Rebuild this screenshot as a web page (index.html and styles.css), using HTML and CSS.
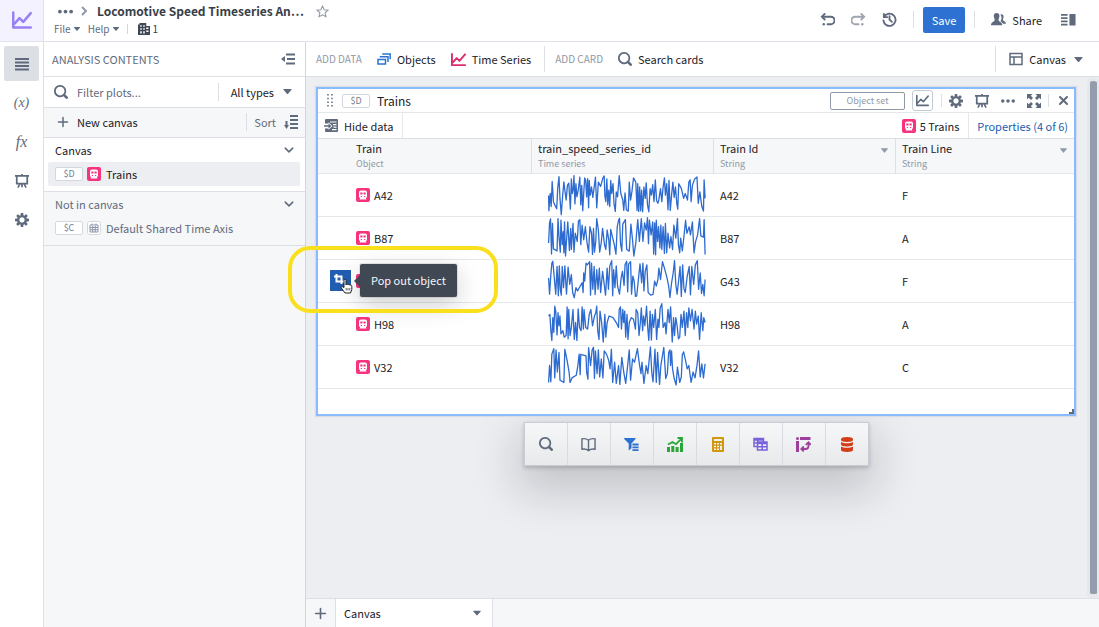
FILE: index.html
```html
<!DOCTYPE html>
<html lang="en">
<head>
    <meta charset="utf-8">
    <title>Locomotive Speed Timeseries Analysis</title>
    <link rel="stylesheet" href="styles.css">
</head>
<body>
    <!-- Shared icons -->
    <svg class="sprite" aria-hidden="true">
        <symbol id="search" viewBox="0 0 16 16"><path d="M15.55 13.43l-2.67-2.68a6.94 6.94 0 001.11-3.76c0-3.87-3.13-7-7-7s-7 3.13-7 7 3.13 7 7 7c1.39 0 2.68-.42 3.76-1.11l2.68 2.67a1.498 1.498 0 102.12-2.12zm-8.56-1.44c-2.76 0-5-2.24-5-5s2.24-5 5-5 5 2.24 5 5-2.24 5-5 5z"/></symbol>
        <symbol id="caret" viewBox="0 0 16 16"><path d="M14 5c0-.5-.4-.8-.8-.8H2.8c-.8 0-1.1.8-.6 1.3l5.2 6c.3.4.9.4 1.2 0l5.2-6c.1-.1.2-.3.2-.5z"/></symbol>
        <symbol id="chevron" viewBox="0 0 16 16"><path d="M3 5.5l5 5 5-5" fill="none" stroke="currentColor" stroke-width="2" stroke-linecap="round" stroke-linejoin="round"/></symbol>
        <symbol id="plus" viewBox="0 0 16 16"><path d="M8 2v12M2 8h12" fill="none" stroke="currentColor" stroke-width="2" stroke-linecap="round"/></symbol>
        <symbol id="more" viewBox="0 0 16 16"><circle cx="2" cy="8" r="2"/><circle cx="8" cy="8" r="2"/><circle cx="14" cy="8" r="2"/></symbol>
        <symbol id="chart" viewBox="0 0 16 16"><path d="M1 2v12h14M2 11l4-4.5 3 3 6-7" fill="none" stroke="currentColor" stroke-width="2" stroke-linecap="round" stroke-linejoin="round"/></symbol>
        <symbol id="cog" viewBox="0 0 16 16"><path d="M15.19 6.39h-1.85c-.11-.37-.27-.71-.45-1.04l1.36-1.36c.31-.31.31-.82 0-1.13l-1.13-1.13a.803.803 0 00-1.13 0l-1.36 1.36c-.33-.17-.67-.33-1.04-.44V.79c0-.44-.36-.8-.8-.8h-1.6c-.44 0-.8.36-.8.8v1.86c-.39.12-.75.28-1.1.47l-1.3-1.3c-.3-.3-.79-.3-1.09 0L1.82 2.91c-.3.3-.3.79 0 1.09l1.3 1.3c-.2.34-.36.7-.48 1.09H.79c-.44 0-.8.36-.8.8v1.6c0 .44.36.8.8.8h1.85c.11.37.27.71.45 1.04l-1.36 1.36c-.31.31-.31.82 0 1.13l1.13 1.13c.31.31.82.31 1.13 0l1.36-1.36c.33.18.67.33 1.04.44v1.86c0 .44.36.8.8.8h1.6c.44 0 .8-.36.8-.8v-1.86c.39-.12.75-.28 1.1-.47l1.3 1.3c.3.3.79.3 1.09 0l1.09-1.09c.3-.3.3-.79 0-1.09l-1.3-1.3c.19-.35.36-.71.48-1.1h1.85c.44 0 .8-.36.8-.8v-1.6a.816.816 0 00-.81-.79zm-7.2 4.6c-1.66 0-3-1.34-3-3s1.34-3 3-3 3 1.34 3 3-1.34 3-3 3z"/></symbol>
        <symbol id="board" viewBox="0 0 16 16"><path d="M0 1h7V0h2v1h7v2h-1v9h-3.2l1.7 3-1.7 1-2-4H9v3H7v-3h-.8l-2 4-1.7-1 1.7-3H1V3H0zm3 2v7h10V3z"/></symbol>
        <symbol id="train" viewBox="0 0 14 14"><rect width="14" height="14" rx="2" fill="#f5337e"/><path fill="#fff" d="M5 2.500h4a2 2 0 012 2v4a2 2 0 01-1.200 1.800l.7 1.200H3.500l.7-1.200A2 2 0 013 8.500v-4a2 2 0 012-2z"/><path fill="#f5337e" d="M4.300 4.500h2.200v2H4.300zM7.500 4.500h2.200v2H7.500zM4.800 8h1.200v1H4.800zM8 8h1.200v1H8z"/></symbol>
    </svg>

    <header class="header">
        <div class="logo"><svg width="22" height="20"><use href="#chart"/></svg></div>
        <div class="heading">
            <div class="title-row">
                <button class="icon-btn" aria-label="Parent folders"><svg width="15" height="15"><use href="#more"/></svg></button>
                <svg class="crumb" width="10" height="10" viewBox="0 0 10 10"><path d="M3 1l4 4-4 4"/></svg>
                <h1>Locomotive Speed Timeseries An…</h1>
                <button class="icon-btn star" aria-label="Favorite"><svg width="13" height="13" viewBox="0 0 16 16"><path d="M8 1.300l2 4.500 4.900.5-3.700 3.300 1.100 4.900L8 12l-4.300 2.500 1.100-4.900L1.100 6.300 6 5.800z" fill="none" stroke="currentColor" stroke-width="1.300"/></svg></button>
            </div>
            <div class="menu-row">
                <button>File <svg width="8" height="8"><use href="#caret"/></svg></button>
                <button>Help <svg width="8" height="8"><use href="#caret"/></svg></button>
                <span class="org">
                    <svg width="12" height="12" viewBox="0 0 16 16"><path fill-rule="evenodd" d="M2 0h9v4h5v12H0V2h2zM3 3v2h2V3zm4 0v2h2V3zM3 7v2h2V7zm4 0v2h2V7zm-4 4v3h2v-3zm4 0v3h2v-3zm4-5v2h3V6zm0 4v2h3v-2z"/></svg>
                    1
                </span>
            </div>
        </div>
        <div class="actions">
            <button class="icon-btn" aria-label="Undo"><svg class="line" width="15" height="15" viewBox="0 0 16 16"><path d="M5 2L2 5l3 3M2 5h9.500a3.500 3.500 0 010 8H8"/><circle class="dot" cx="4" cy="13" r="1.300"/></svg></button>
            <button class="icon-btn faded" aria-label="Redo"><svg class="line" width="15" height="15" viewBox="0 0 16 16"><path d="M11 2l3 3-3 3M14 5H4.500a3.500 3.500 0 000 8H8"/><circle class="dot" cx="12" cy="13" r="1.300"/></svg></button>
            <button class="icon-btn" aria-label="History"><svg class="line" width="15" height="15" viewBox="0 0 16 16"><path d="M2 2v3.500h3.500M2.200 5.300A6.500 6.500 0 111.500 9M8 4.500V8l2.500 2.500"/></svg></button>
            <button class="save">Save</button>
            <button class="share"><svg width="15" height="15" viewBox="0 0 16 16"><path d="M11 2.500c1.800 0 2.600 1.400 2.400 3-.1 1.200-.7 1.800-.7 2.700 0 1.400 3.300 1.600 3.300 4.300h-3.200c-.8-1.500-2.600-2-2.600-2.800 0-.7 1-1.600 1-3.700 0-1.300-.5-2.300-1.300-3 .3-.3.700-.5 1.100-.5z"/><path d="M6 1c2.200 0 3.300 1.600 3 3.800C8.800 6.500 8 7.200 8 8.500c0 1.900 4 1.900 4 5.500H0c0-3.600 4-3.600 4-5.500 0-1.300-.8-2-1-3.700C2.700 2.600 3.800 1 6 1z"/></svg>Share</button>
            <button class="icon-btn" aria-label="Toggle panel"><svg width="15" height="15" viewBox="0 0 16 16"><path d="M0 2h7v2H0zM0 5.500h7v2H0zM0 9h7v2H0zM0 12.500h7v2H0zM9 2h6.500v12.500H9z"/></svg></button>
        </div>
    </header>

    <div class="workspace">
        <nav class="rail">
            <button class="active" aria-label="Contents"><svg width="14" height="14" viewBox="0 0 14 14"><path d="M0 1h14v2H0zM0 4.500h14v2H0zM0 8h14v2H0zM0 11.500h14v2H0z"/></svg></button>
            <button>(x)</button>
            <button class="fx">fx</button>
            <button aria-label="Presentation"><svg width="14" height="14"><use href="#board"/></svg></button>
            <button aria-label="Settings"><svg width="14" height="14"><use href="#cog"/></svg></button>
        </nav>

        <aside class="sidebar">
            <div class="side-head">
                <h2>ANALYSIS CONTENTS</h2>
                <button class="icon-btn" aria-label="Collapse"><svg width="14" height="14" viewBox="0 0 14 14"><path d="M5 1.500h9v2H5zM6 6h8v2H6zM5 10.500h9v2H5zM0 7l4-3v6z"/></svg></button>
            </div>
            <div class="filter">
                <svg width="14" height="14"><use href="#search"/></svg>
                <input type="text" placeholder="Filter plots..." aria-label="Filter plots">
                <button>All types <svg width="11" height="11"><use href="#caret"/></svg></button>
            </div>
            <div class="new-canvas">
                <button><svg width="12" height="12"><use href="#plus"/></svg>New canvas</button>
                <button class="sort">Sort <svg width="14" height="14" viewBox="0 0 14 14"><path d="M6 0h8v2H6zM6 4h8v2H6zM6 8h8v2H6zM6 12h8v2H6zM1.500 6h2v4H5l-2.500 4L0 10h1.500z"/></svg></button>
            </div>
            <section class="group">
                <h3>Canvas <svg width="12" height="12"><use href="#chevron"/></svg></h3>
                <a class="item selected" href="#"><span class="tag">$D</span><svg width="14" height="14"><use href="#train"/></svg>Trains</a>
            </section>
            <section class="group muted">
                <h3>Not in canvas <svg width="12" height="12"><use href="#chevron"/></svg></h3>
                <a class="item" href="#"><span class="tag">$C</span><svg width="14" height="14" viewBox="0 0 14 14"><rect x=".5" y=".5" width="13" height="13" rx="2" fill="#fff" stroke="#d3d8de"/><path d="M3 4h8v7H3zM3 6.500h8M3 8.700h8M5.700 5v6M8.300 5v6M5 2.500V4M9 2.500V4" fill="none" stroke="#8a96a5"/></svg>Default Shared Time Axis</a>
            </section>
        </aside>

        <main class="main">
            <div class="toolbar">
                <span class="label">ADD DATA</span>
                <button class="objects"><svg class="outline" width="14" height="14" viewBox="0 0 14 14"><path d="M1 7.500h7.500v4.500H1zM3.500 5.500V4.700H11v4.500h-.7M6 2.700V2h7.200v4.500h-.7"/></svg>Objects</button>
                <button class="series"><svg width="15" height="15"><use href="#chart"/></svg>Time Series</button>
                <span class="label split">ADD CARD</span>
                <button class="cards"><svg width="14" height="14"><use href="#search"/></svg>Search cards</button>
                <button class="view"><svg class="outline" width="14" height="14" viewBox="0 0 14 14"><path d="M1 1.500h12v11H1zM1 5h12M5 5v7"/></svg>Canvas<svg width="11" height="11"><use href="#caret"/></svg></button>
            </div>

            <div class="canvas">
                <div class="cards-area">
                    <article class="card">
                        <div class="card-head">
                            <svg width="6" height="13" viewBox="0 0 6 13"><path d="M1 0v13M5 0v13" stroke="#5f6b7c" stroke-width="1.500" stroke-dasharray="1.500 2.200"/></svg>
                            <span class="tag">$D</span>
                            <h2>Trains</h2>
                            <span class="kind">Object set</span>
                            <button class="icon-btn boxed" aria-label="Chart"><svg width="13" height="13"><use href="#chart"/></svg></button>
                            <span class="tools">
                                <button class="icon-btn" aria-label="Settings"><svg width="14" height="14"><use href="#cog"/></svg></button>
                                <button class="icon-btn" aria-label="Present"><svg width="14" height="14"><use href="#board"/></svg></button>
                                <button class="icon-btn" aria-label="More"><svg width="14" height="14"><use href="#more"/></svg></button>
                                <button class="icon-btn" aria-label="Expand"><svg width="14" height="14" viewBox="0 0 14 14"><path d="M0 0h5.500L3.800 1.700 6 4 4 6 1.700 3.800 0 5.500zM14 0v5.500l-1.700-1.700L10 6 8 4l2.200-2.300L8.500 0zM14 14H8.500l1.700-1.700L8 10l2-2 2.300 2.200L14 8.500zM0 14V8.500l1.700 1.700L4 8l2 2-2.200 2.300L5.500 14z"/></svg></button>
                            </span>
                            <button class="icon-btn close" aria-label="Close"><svg class="line" width="11" height="11" viewBox="0 0 11 11"><path d="M2 2l7 7M9 2L2 9"/></svg></button>
                        </div>
                        <div class="card-bar">
                            <button class="hide"><svg width="14" height="13" viewBox="0 0 14 13"><path fill-rule="evenodd" d="M2 0h11a1 1 0 011 1v11a1 1 0 01-1 1H2a1 1 0 01-1-1V9.500h3.500v1.200L8.500 7 4.500 3.200v1.300H1V1a1 1 0 011-1zM9 5v1.200h3.500V5zM9.500 7.500v1.200h3V7.500zM8 10v1.200h4.500V10zM6 2.500v1h6.500v-1z"/><path d="M0 6.200h4.500V4.500L7.500 7l-3 2.500V7.800H0z"/></svg>Hide data</button>
                            <span class="count"><svg width="14" height="14"><use href="#train"/></svg>5 Trains</span>
                            <a class="props" href="#">Properties (4 of 6)</a>
                        </div>
                        <table>
                            <thead>
                                <tr>
                                    <th class="c-train">Train<small>Object</small></th>
                                    <th class="c-col">train_speed_series_id<small>Time series</small></th>
                                    <th class="c-col">Train Id<small>String</small><svg class="sorter" width="9" height="9"><use href="#caret"/></svg></th>
                                    <th>Train Line<small>String</small><svg class="sorter" width="9" height="9"><use href="#caret"/></svg></th>
                                </tr>
                            </thead>
                            <tbody>
                                <tr>
                                    <td><span class="object"><svg width="14" height="14"><use href="#train"/></svg>A42</span></td>
                                    <td><svg class="spark" viewBox="0 0 486 126"><polyline points="2,66 3,113 7,60 10,100 13,23 17,85 21,95 27,107 30,45 34,8 37,75 41,125 45,70 49,24 52,50 56,80 60,35 64,28 69,108 72,15 75,60 78,45 80,5 83,92 86,30 89,70 93,50 98,10 101,95 104,35 107,113 110,60 113,12 116,20 119,70 122,14 125,104 127,20 130,65 134,40 138,72 146,10 150,104 155,25 162,38 169,12 173,6 175,68 178,85 181,15 184,95 187,50 190,100 193,20 196,60 200,30 203,90 207,115 210,55 214,70 219,5 224,60 230,80 233,112 237,58 241,110 247,114 250,25 254,80 258,55 263,12 270,25 274,112 276,30 279,115 282,40 285,113 288,50 291,116 295,40 299,75 302,27 306,95 310,116 314,45 318,65 322,33 326,85 330,18 334,82 338,90 341,78 346,45 350,85 354,40 358,12 361,65 365,30 369,110 372,20 376,112 380,65 384,25 388,72 392,40 396,90 399,108 402,30 410,44 417,75 422,60 429,80 433,25 437,18 440,85 444,35 451,15 458,9 462,90 467,55 473,100 478,114 480,18 483,75"/></svg></td>
                                    <td>A42</td>
                                    <td>F</td>
                                </tr>
                                <tr>
                                    <td><span class="object"><svg width="14" height="14"><use href="#train"/></svg>B87</span></td>
                                    <td><svg class="spark" viewBox="0 0 486 126"><polyline points="2,80 5,18 8,6 11,114 14,20 17,98 28,104 31,5 34,60 38,108 40,10 44,85 47,45 49,110 51,15 54,120 58,60 61,15 66,103 70,35 72,100 77,20 80,108 84,50 90,75 94,12 98,8 101,85 105,25 110,70 115,30 120,78 125,108 129,30 134,50 137,115 140,35 143,108 147,75 150,5 155,40 159,108 164,78 168,35 174,86 178,100 182,40 187,70 190,116 193,38 198,60 204,85 209,114 213,30 217,10 220,4 223,80 227,105 230,22 238,8 242,100 250,105 255,22 260,70 264,120 270,80 276,8 281,75 287,5 292,75 297,18 302,40 306,2 309,82 312,10 317,55 322,15 325,114 328,18 331,116 333,10 337,75 340,30 344,95 347,25 350,100 354,30 358,112 361,20 365,110 369,50 374,95 378,60 383,100 387,25 393,65 398,5 401,85 405,110 408,65 413,104 418,60 423,10 427,50 434,30 438,55 444,15 449,110 454,75 460,55 466,5 470,58 478,62 480,8 483,115"/></svg></td>
                                    <td>B87</td>
                                    <td>A</td>
                                </tr>
                                <tr>
                                    <td>
                                        <button class="popout" aria-label="Pop out object"><svg width="10" height="10" viewBox="0 0 10 10"><path d="M2.500 0v7.500H10M0 2.500h7.500V10"/></svg></button>
                                        <span class="object"><svg width="14" height="14"><use href="#train"/></svg></span>
                                        <span class="tooltip">Pop out object</span>
                                        <svg class="pointer" width="14" height="16" viewBox="0 0 14 16"><path d="M4 9.500V2.300a1 1 0 012 0V7l.3-.7c.7-.6 1.500-.3 1.700.5.7-.7 1.700-.4 1.900.4.800-.5 1.900-.1 1.900 1v3.300l-1.300 3.500H5L1.300 10c-.6-1 .5-1.900 1.300-1.200z" fill="#fff" stroke="#222" stroke-width="1"/><path d="M6.200 10v2.500M8 10v2.500M9.800 10v2.500" stroke="#222" stroke-width=".7"/></svg>
                                        <span class="ring"></span>
                                    </td>
                                    <td><svg class="spark" viewBox="0 0 486 126"><polyline points="2,55 5,105 9,45 12,10 15,4 20,60 24,105 28,20 32,110 35,18 38,90 41,108 44,20 48,85 52,18 57,105 62,22 67,75 72,45 76,100 81,116 86,85 91,95 105,70 108,100 110,40 113,65 117,10 121,15 128,5 131,108 134,10 138,90 142,20 145,106 150,30 154,90 158,25 162,100 168,35 173,75 177,108 182,25 186,90 190,18 196,2 199,110 202,30 206,85 210,18 214,80 220,105 225,55 229,35 234,78 237,15 242,4 245,98 248,12 254,5 257,105 261,50 265,65 269,112 273,110 278,60 283,12 288,70 292,10 295,95 299,35 304,15 308,100 316,108 323,106 328,65 333,80 338,60 341,25 346,60 352,5 358,25 366,55 371,80 375,115 380,70 385,40 389,2 393,75 397,105 402,60 406,20 410,112 414,15 418,88 422,100 428,50 434,20 438,107 442,20 448,75 453,15 459,2 463,90 468,40 472,103 476,75 480,110 483,60"/></svg></td>
                                    <td>G43</td>
                                    <td>F</td>
                                </tr>
                                <tr>
                                    <td><span class="object"><svg width="14" height="14"><use href="#train"/></svg>H98</span></td>
                                    <td><svg class="spark" viewBox="0 0 486 126"><polyline points="2,40 6,35 9,85 12,115 15,45 18,90 21,10 24,25 28,98 31,30 34,70 37,40 40,95 46,85 50,105 56,100 59,12 62,110 64,20 68,100 72,75 77,20 81,112 85,60 89,115 93,18 97,75 102,85 105,12 109,80 111,20 116,75 122,80 127,35 132,20 137,70 143,40 147,30 150,10 153,85 157,112 160,25 165,60 170,120 175,35 178,105 182,60 188,40 200,45 210,60 217,75 219,20 223,12 226,80 230,20 233,60 236,25 239,105 243,35 246,112 250,60 256,45 263,50 269,80 271,20 276,30 280,100 284,60 287,15 291,85 294,40 298,70 303,10 307,80 310,115 314,25 318,114 321,35 325,75 330,20 334,112 338,50 341,75 345,15 350,2 354,75 360,60 363,95 369,20 373,60 377,12 382,120 386,45 389,100 393,45 397,70 401,110 405,105 409,35 413,75 418,25 422,100 426,30 430,75 433,15 438,55 443,20 449,80 453,25 457,65 462,40 466,112 471,30 476,85 479,45 483,60"/></svg></td>
                                    <td>H98</td>
                                    <td>A</td>
                                </tr>
                                <tr>
                                    <td><span class="object"><svg width="14" height="14"><use href="#train"/></svg>V32</span></td>
                                    <td><svg class="spark" viewBox="0 0 486 126"><polyline points="2,112 5,60 9,110 12,25 18,8 21,98 25,12 29,80 34,20 37,105 49,112 52,10 59,45 65,80 68,112 74,98 87,90 92,60 96,25 99,88 101,26 117,30 119,80 123,102 125,5 131,60 136,12 140,4 143,100 146,15 151,85 155,12 159,95 164,40 169,98 173,15 180,25 187,45 191,70 195,10 199,112 205,50 210,115 217,60 221,118 227,35 233,80 239,115 245,60 250,12 254,105 260,40 266,50 275,8 281,55 286,85 289,50 295,115 302,60 307,85 315,3 319,80 323,110 329,10 333,112 337,20 343,118 347,60 356,4 362,100 367,85 371,20 375,12 377,60 380,15 383,70 388,100 394,120 398,65 405,112 410,95 413,28 417,18 423,45 428,70 433,60 440,112 446,80 452,98 458,60 463,15 468,95 473,55 478,98 483,55"/></svg></td>
                                    <td>V32</td>
                                    <td>C</td>
                                </tr>
                            </tbody>
                        </table>
                        <svg class="resize" width="5" height="5" viewBox="0 0 5 5"><path d="M5 0v5H0V3h3V0z"/></svg>
                    </article>

                    <div class="dock">
                        <button class="gray" aria-label="Search"><svg width="14" height="14"><use href="#search"/></svg></button>
                        <button class="gray" aria-label="Book"><svg class="outline" width="15" height="15" viewBox="0 0 16 16"><path d="M8 3.500C6 1.800 3.500 1.500 1 2v11c2.500-.5 5-.2 7 1.500 2-1.700 4.500-2 7-1.500V2c-2.500-.5-5-.2-7 1.500zv11"/></svg></button>
                        <button class="blue" aria-label="Filter"><svg width="15" height="15" viewBox="0 0 16 16"><path d="M.6 1h11.200c.6 0 .8.700.4 1.100L8 6.800V12l-3 2.500V6.800L.2 2.100C-.2 1.700 0 1 .6 1zM9 7h6.500v2H9zM9 10h6.500v2H9zM9 13h6.500v2H9z"/></svg></button>
                        <button class="green" aria-label="Trend"><svg width="16" height="15" viewBox="0 0 16 15"><path d="M0 10h3v5H0zM4.300 9h3v6h-3zM8.600 10h3v5h-3zM13 6h3v9h-3z"/><path d="M1 7.500L5.500 5 9 7.200 14 2M10.500 1H15v4.500" fill="none" stroke="currentColor" stroke-width="1.800"/></svg></button>
                        <button class="gold" aria-label="Calculator"><svg width="12" height="15" viewBox="0 0 12 15"><path fill-rule="evenodd" d="M1 0h10a1 1 0 011 1v13a1 1 0 01-1 1H1a1 1 0 01-1-1V1a1 1 0 011-1zm1 2v2h8V2zM2 6v1.500h2V6zm3 0v1.500h2V6zm3 0v1.500h2V6zM2 8.700v1.500h2V8.700zm3 0v1.500h2V8.700zm3 0V13h2V8.700zM2 11.500V13h2v-1.500zm3 0V13h2v-1.500z"/></svg></button>
                        <button class="violet" aria-label="Tables"><svg class="outline" width="15" height="14" viewBox="0 0 15 14"><path d="M4 9.500H1v-8h9.500V5M1 3h9M1 6h3M4.500 1.500V5M4.500 5h9.500v8H4.500zM4.500 6.500H14M4.500 9.700H14M9.200 6.500V13"/></svg></button>
                        <button class="purple" aria-label="Pivot"><svg width="15" height="15" viewBox="0 0 15 15"><circle cx="1.500" cy="1.500" r="1.500"/><path d="M4 0h10.500v3H4zM0 4h3v11H0z"/><path d="M12.500 6.500v2.500c0 2-1 3-3 3H6M9.800 7.800l2.700-2.500 2.300 2.500M7.800 9.500L5.300 12l2.500 2.400" fill="none" stroke="currentColor" stroke-width="1.800"/></svg></button>
                        <button class="red" aria-label="Database"><svg width="12" height="15" viewBox="0 0 12 15"><path d="M0 2c0-1.300 2.500-2 6-2s6 .7 6 2v1c0 1.300-2.500 2-6 2S0 4.300 0 3zM0 5c1.300.9 3.500 1.200 6 1.200S10.700 5.900 12 5v2.600c0 1.200-2.500 1.900-6 1.900S0 8.800 0 7.600zM0 9.500c1.300.9 3.500 1.200 6 1.200s4.700-.3 6-1.200V13c0 1.300-2.500 2-6 2s-6-.7-6-2z"/></svg></button>
                    </div>
                </div>
                <div class="scrollbar"></div>
            </div>

            <div class="tabs">
                <button class="add" aria-label="Add canvas"><svg width="13" height="13"><use href="#plus"/></svg></button>
                <button class="tab">Canvas <svg width="10" height="10"><use href="#caret"/></svg></button>
            </div>
        </main>
    </div>
</body>
</html>
```
FILE: styles.css
```css
* {
    box-sizing: border-box;
}

body {
    display: flex;
    flex-direction: column;
    height: 100vh;
    margin: 0;
    overflow: hidden;
    font-family: "Noto Sans CJK SC", "Noto Sans", sans-serif;
    font-size: 11px;
    line-height: 16px;
    color: #1c2127;
    background: #fff;
}

h1, h2, h3 {
    margin: 0;
    font-weight: normal;
    font-size: 11px;
}

button {
    display: flex;
    align-items: center;
    padding: 0;
    border: 0;
    background: none;
    font: inherit;
    color: inherit;
    cursor: pointer;
}

a {
    color: inherit;
    text-decoration: none;
}

svg {
    display: block;
    flex: none;
    fill: currentColor;
    color: #5f6b7c;
}

.sprite {
    position: absolute;
    width: 0;
    height: 0;
}

.line {
    fill: none;
    stroke: currentColor;
    stroke-width: 2;
    stroke-linecap: round;
}

.line .dot {
    fill: currentColor;
    stroke: none;
}

.outline {
    fill: none;
    stroke: currentColor;
    stroke-width: 1.5;
}

.icon-btn {
    justify-content: center;
    flex: none;
}

/* Header */
.header {
    display: flex;
    flex: none;
    height: 42px;
    border-bottom: 1px solid #e1e3ea;
}

.logo {
    display: flex;
    align-items: center;
    justify-content: center;
    width: 44px;
    padding-bottom: 2px;
    background: #f5f2ff;
    border-right: 1px solid #e1e0ee;
}

.logo svg {
    color: #9881f3;
}

.heading {
    padding: 2px 0 0 10px;
}

.title-row {
    display: flex;
    align-items: center;
    height: 18px;
    padding-left: 4px;
}

.title-row h1 {
    margin: 0 12px 0 8px;
    font-size: 12px;
    font-weight: bold;
    color: #383e47;
    white-space: nowrap;
}

.crumb {
    margin-left: 6px;
    fill: none;
    stroke: #8f99a8;
    stroke-width: 2;
}

.star svg {
    color: #8f99a8;
}

.menu-row {
    display: flex;
    align-items: center;
    height: 18px;
    gap: 7px;
    font-size: 10px;
    color: #5f6b7c;
}

.menu-row button {
    gap: 2px;
}

.org {
    display: flex;
    align-items: center;
    gap: 3px;
    height: 10px;
    padding-left: 10px;
    border-left: 1px solid #d3d8de;
    color: #383e47;
}

.org svg {
    color: #404854;
}

.actions {
    display: flex;
    align-items: center;
    margin-left: auto;
    padding: 0 23px 2px 0;
    gap: 16px;
}

.faded {
    opacity: .6;
}

.save {
    height: 26px;
    padding: 0 9px;
    border-radius: 2px;
    background: #2d72d2;
    color: #fff;
    position: relative;
    margin: 0 10px;
}

.save::before,
.save::after {
    content: "";
    position: absolute;
    left: -10px;
    width: 1px;
    height: 17px;
    background: #dce0e5;
}

.save::after {
    left: auto;
    right: -10px;
}

.share {
    gap: 6px;
    margin-right: 3px;
}

/* Left rail */
.workspace {
    display: flex;
    flex: 1;
    min-height: 0;
}

.rail {
    display: flex;
    flex-direction: column;
    flex: none;
    gap: 4px;
    width: 44px;
    padding: 4px;
    border-right: 1px solid #dce0e5;
}

.rail button {
    justify-content: center;
    height: 35px;
    border-radius: 2px;
    font: italic 14px "Liberation Serif", serif;
    color: #5f6b7c;
}

.rail .fx {
    font-size: 16px;
}

.rail .active {
    background: #dce0e5;
}

/* Contents panel */
.sidebar {
    flex: none;
    width: 262px;
    background: #f6f7f9;
    border-right: 1px solid #d3d5dc;
}

.side-head {
    display: flex;
    align-items: center;
    justify-content: space-between;
    height: 35px;
    padding: 0 10px 0 8px;
    border-bottom: 1px solid #dce0e5;
    background: #fff;
}

.side-head h2 {
    color: #5f6b7c;
}

.filter,
.new-canvas {
    display: flex;
    align-items: center;
    height: 31px;
    padding: 0 7px 1px 10px;
    border-bottom: 1px solid #dce0e5;
}

.filter {
    background: #fff;
}

.filter input {
    flex: 1;
    min-width: 0;
    padding: 0 9px;
    border: 0;
    outline: 0;
    background: none;
    font: inherit;
}

.filter input::placeholder {
    color: #5f6b7c;
}

.filter button,
.sort {
    height: 18px;
    border-left: 1px solid #dce0e5;
}

.filter button {
    padding: 0 5px 0 12px;
    gap: 8px;
}

.new-canvas {
    height: 30px;
    justify-content: space-between;
    padding-left: 13px;
}

.new-canvas button {
    gap: 8px;
}

.new-canvas .sort {
    padding-left: 7px;
    color: #5f6b7c;
}

.group {
    height: 54px;
    padding: 0 5px 5px 4px;
    border-bottom: 1px solid #dce0e5;
    background: #fff;
}

.group h3 {
    display: flex;
    align-items: center;
    justify-content: space-between;
    height: 24px;
    padding: 0 5px 0 7px;
}

.muted {
    background: #f6f7f9;
    color: #5f6b7c;
}

.item {
    display: flex;
    align-items: center;
    height: 24px;
    padding-left: 7px;
    gap: 5px;
    border-radius: 2px;
}

.tag {
    width: 28px;
    height: 14px;
    margin-right: -1px;
    border: 1px solid #d3d8de;
    border-radius: 2px;
    background: #fff;
    font-size: 9px;
    line-height: 12px;
    text-align: center;
    color: #738091;
}

.selected {
    background: #edeef2;
}

/* Toolbar over the canvas */
.main {
    display: flex;
    flex-direction: column;
    flex: 1;
    min-width: 0;
}

.toolbar {
    display: flex;
    align-items: center;
    flex: none;
    height: 35px;
    padding: 0 15px 0 10px;
    border-bottom: 1px solid #dce0e5;
}

.label {
    font-size: 10px;
    color: #8f99a8;
}

.toolbar button {
    gap: 6px;
    margin-left: 15px;
}

.objects svg {
    color: #2d72d2;
}

.series svg {
    color: #db2c6f;
}

.split {
    display: flex;
    align-items: center;
    height: 26px;
    margin-left: 13px;
    padding-left: 10px;
    border-left: 1px solid #dce0e5;
}

.toolbar .view {
    gap: 6px;
    height: 26px;
    margin-left: auto;
    padding-left: 13px;
    border-left: 1px solid #dce0e5;
}

.view svg:last-child {
    margin-left: 1px;
}

.canvas {
    display: flex;
    flex: 1;
    min-height: 0;
    background: #edeef2;
}

.cards-area {
    display: flex;
    flex-direction: column;
    align-items: center;
    flex: 1;
    gap: 6px;
    padding: 10px 11px 0 10px;
}

.scrollbar {
    width: 12px;
    border: solid #e6e8ec;
    border-width: 4px 2px 5px 3px;
    border-radius: 6px;
    background: #929dab;
}

/* Trains card */
.card {
    position: relative;
    align-self: stretch;
    padding-bottom: 25px;
    border: 2px solid #8abbff;
    background: #fff;
    box-shadow: 0 0 1px 1px #d9dde4;
}

.card-head {
    display: flex;
    align-items: center;
    height: 24px;
    padding: 0 5px 0 9px;
    border-bottom: 1px solid #e5e8eb;
}

.card-head .tag {
    margin: 0 7px 0 9px;
}

.card-head h2 {
    font-size: 12px;
}

.kind {
    width: 75px;
    height: 18px;
    margin-left: auto;
    border: 1px solid #8f99a8;
    border-radius: 2px;
    font-size: 9px;
    line-height: 16px;
    text-align: center;
    color: #8f99a8;
}

.boxed {
    width: 21px;
    height: 21px;
    margin-left: 7px;
    border: 1px solid #c5cbd3;
    border-radius: 3px;
}

.tools {
    display: flex;
    align-items: center;
    height: 13px;
    gap: 12px;
    margin-left: 8px;
    padding: 0 7px;
    border: solid #dce0e5;
    border-width: 0 1px;
}

.close {
    margin-left: 9px;
}

.card-bar {
    display: flex;
    align-items: stretch;
    height: 26px;
    border-bottom: 1px solid #dce0e5;
}

.hide {
    gap: 6px;
    padding: 0 9px 0 6px;
    border-right: 1px solid #e5e8eb;
}

.count {
    display: flex;
    align-items: center;
    gap: 4px;
    margin-left: auto;
    padding-right: 9px;
}

.props {
    display: flex;
    align-items: center;
    padding: 0 6px 0 8px;
    border-left: 1px solid #e5e8eb;
    color: #215db0;
}

table {
    width: 100%;
    table-layout: fixed;
    border-collapse: separate;
    border-spacing: 0;
}

th {
    position: relative;
    height: 35px;
    padding: 2px 6px;
    border-right: 1px solid #dce0e5;
    border-bottom: 1px solid #e5e8eb;
    background: #f6f7f9;
    font-weight: normal;
    line-height: 15px;
    text-align: left;
}

th:last-child {
    border-right: 0;
}

th small {
    display: block;
    font-size: 9px;
    color: #8f99a8;
}

.c-train {
    width: 214px;
    padding-left: 38px;
}

.c-col {
    width: 182px;
}

.sorter {
    position: absolute;
    top: 7px;
    right: 6px;
    color: #8f99a8;
}

td {
    height: 43px;
    padding: 0 6px 1px;
    border-bottom: 1px solid #e5e8eb;
}

td:first-child {
    position: relative;
    padding-left: 38px;
}

.object {
    display: flex;
    align-items: center;
    gap: 4px;
}

.spark {
    width: 162px;
    height: 41px;
    margin-left: 8px;
    overflow: visible;
    fill: none;
    stroke: #2d6bd0;
    stroke-width: 4;
    stroke-linejoin: round;
}

/* Hovered row: the button, its tooltip and the highlight sit over the cell */
.popout {
    position: absolute;
    top: 10px;
    left: 12px;
    align-items: flex-start;
    width: 21px;
    height: 21px;
    padding: 4px;
    background: #215db0;
}

.popout svg {
    fill: none;
    stroke: #fff;
    stroke-width: 2;
}

.tooltip {
    position: absolute;
    top: 4px;
    left: 42px;
    padding: 0 11px;
    border-radius: 2px;
    background: #404854;
    color: #f6f7f9;
    line-height: 33px;
    white-space: nowrap;
    box-shadow: 0 0 0 1px rgba(17, 20, 24, .1), 0 8px 24px rgba(17, 20, 24, .2);
}

.tooltip::before {
    content: "";
    position: absolute;
    top: 11px;
    left: -6px;
    border: solid transparent;
    border-width: 6px 6px 6px 0;
    border-right-color: #404854;
}

.pointer {
    position: absolute;
    top: 18px;
    left: 22px;
}

.ring {
    position: absolute;
    top: -14px;
    left: -30px;
    width: 210px;
    height: 67px;
    border: 4px solid #fadf1d;
    border-radius: 22px;
    pointer-events: none;
}

.resize {
    position: absolute;
    right: 0;
    bottom: 0;
}

/* Floating actions */
.dock {
    display: flex;
    height: 44px;
    border: 1px solid #c9ccd2;
    background: linear-gradient(#f6f7f9, #e8e9eb);
    box-shadow: 0 2px 4px rgba(17, 20, 24, .2), 0 18px 46px 6px rgba(17, 20, 24, .2);
}

.dock button {
    justify-content: center;
    width: 43px;
    border-right: 1px solid #d9dbe2;
}

.dock button:last-child {
    width: 42px;
    border-right: 0;
}

.dock svg {
    color: inherit;
}

.gray { color: #5f6b7c; }
.blue { color: #2d72d2; }
.green { color: #29a634; }
.gold { color: #d1980b; }
.violet { color: #7961db; }
.purple { color: #9d3f9d; }
.red { color: #d33d17; }

/* Canvas tabs */
.tabs {
    display: flex;
    flex: none;
    height: 28px;
    background: #f6f7f9;
    box-shadow: 0 -1px 0 #dce0e5;
}

.tabs button {
    border-right: 1px solid #dce0e5;
}

.add {
    justify-content: center;
    width: 30px;
}

.tab {
    justify-content: space-between;
    width: 157px;
    padding: 0 10px 0 8px;
    background: #fff;
}
```
